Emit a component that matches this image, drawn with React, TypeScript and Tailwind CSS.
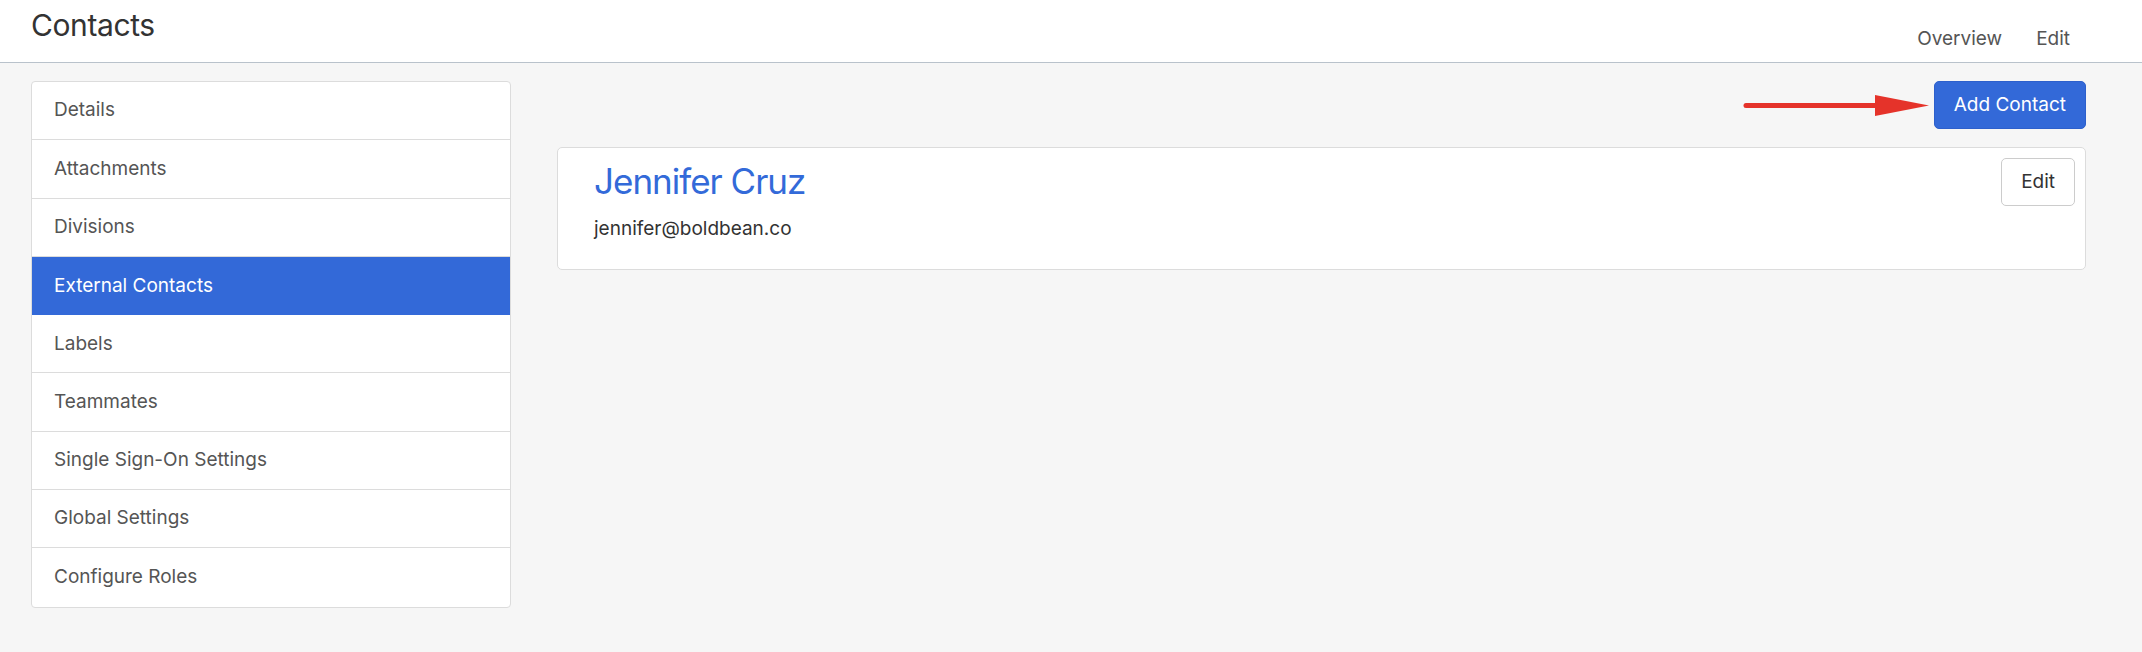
const sections = [
  'Details',
  'Attachments',
  'Divisions',
  'External Contacts',
  'Labels',
  'Teammates',
  'Single Sign-On Settings',
  'Global Settings',
  'Configure Roles'
];

const active = 'External Contacts';

const Arrow = () => (
  <svg width="187" height="24" viewBox="0 0 187 24" className="shrink-0">
    <line x1="3" y1="12.5" x2="136" y2="12.5" stroke="#e5332a" strokeWidth="5" strokeLinecap="round" />
    <polygon points="132,2 186,12.5 132,23" fill="#e5332a" />
  </svg>
);

const App = () => {
  return (
    <div className="min-h-screen bg-[#f6f6f6] font-['Inter','Liberation_Sans',Arial,sans-serif]">
      <header className="flex h-[63px] items-start justify-between border-b border-[#b9c2cb] bg-white pl-[31px] pr-[72px]">
        <h1 className="mt-[10px] text-[30px] leading-none tracking-[-0.4px] text-[#333]">Contacts</h1>
        <nav className="mt-[29px] flex gap-[34px] text-[19px] leading-none text-[#555]">
          <a href="#">Overview</a>
          <a href="#">Edit</a>
        </nav>
      </header>

      <main className="flex items-start gap-[46px] pl-[31px] pr-[56px] pt-[18px]">
        <aside className="w-[480px] shrink-0 overflow-hidden rounded-[4px] border border-[#dcdcdc] bg-white">
          <ul>
            {sections.map((item, index) => (
              <li key={item}>
                <a
                  href="#"
                  className={
                    item === active
                      ? 'flex h-[58.3px] items-center bg-[#3369d8] px-[22px] text-[19px] text-white'
                      : index === sections.length - 1
                        ? 'flex h-[58.3px] items-center px-[22px] text-[19px] text-[#555]'
                        : 'flex h-[58.3px] items-center border-b border-[#dcdcdc] px-[22px] text-[19px] text-[#555]'
                  }
                >
                  {item}
                </a>
              </li>
            ))}
          </ul>
        </aside>

        <section className="flex min-w-0 flex-1 flex-col gap-[18px]">
          <div className="flex items-center justify-end gap-[4px]">
            <Arrow />
            <button className="h-[48px] rounded-[5px] border border-[#2d60cc] bg-[#3369d8] px-[19px] text-[19px] text-white">
              Add Contact
            </button>
          </div>

          <div className="flex items-start justify-between rounded-[5px] border border-[#dcdcdc] bg-white pb-[31px] pl-[36px] pr-[10px] pt-[10px]">
            <div className="mt-[6px]">
              <h2 className="text-[35px] leading-none tracking-[-1px] text-[#336ad9]">Jennifer Cruz</h2>
              <p className="mt-[20px] text-[19px] leading-none text-[#333]">jennifer@boldbean.co</p>
            </div>
            <button className="h-[48px] rounded-[5px] border border-[#cccccc] bg-white px-[19px] text-[19px] text-[#333]">
              Edit
            </button>
          </div>
        </section>
      </main>
    </div>
  );
};

export default App;
